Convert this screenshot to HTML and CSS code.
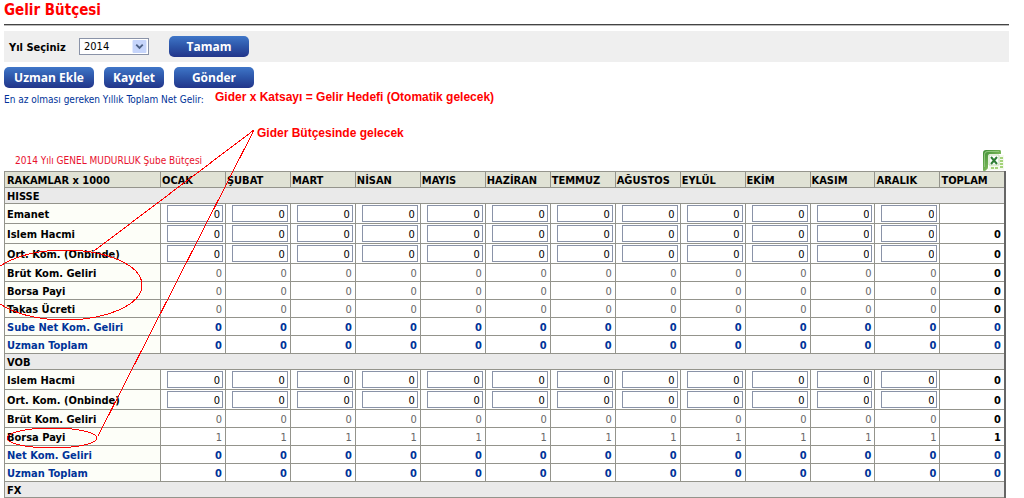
FILE: index.html
```html
<!DOCTYPE html>
<html lang="tr">
<head>
<meta charset="utf-8">
<title>Gelir Bütçesi</title>
<link rel="stylesheet" href="styles.css">
</head>
<body>
<main class="page">
  <h1 class="title">Gelir Bütçesi</h1>
  <form class="filter">
    <label class="filter-label" for="year">Yıl Seçiniz</label>
    <span class="select-box">
      <select id="year" class="select"><option>2014</option></select>
      <svg class="select-arrow" viewBox="0 0 15 14" aria-hidden="true">
        <rect width="15" height="14" rx="1" fill="#c6d5fb"/>
        <path d="M4 5l3.5 3.5L11 5" fill="none" stroke="#4d6185" stroke-width="2"/>
      </svg>
    </span>
    <button type="button" class="btn btn-medium">Tamam</button>
  </form>
  <div class="actions">
    <button type="button" class="btn btn-large">Uzman Ekle</button>
    <button type="button" class="btn btn-small">Kaydet</button>
    <button type="button" class="btn btn-medium">Gönder</button>
  </div>
  <div class="target">
    <span class="target-label">En az olması gereken Yıllık Toplam Net Gelir:</span>
    <strong class="note">Gider x Katsayı = Gelir Hedefi (Otomatik gelecek)</strong>
  </div>
  <div class="table-head">
    <p class="table-title">2014 Yılı GENEL MUDURLUK Şube Bütçesi</p>
    <a class="excel" href="#" aria-label="Excel">
      <svg class="excel-icon" viewBox="0 0 21 21" aria-hidden="true">
        <defs>
          <linearGradient id="leaf" x1="0" y1="0" x2="1" y2="1">
            <stop offset="0" stop-color="#3c8b35"/><stop offset="1" stop-color="#a8d873"/>
          </linearGradient>
        </defs>
        <path d="M3 0h14q1 0 1 2v2H7Q5 4 5 7v10q0 3-4 4-1 0-1-1V3q0-3 3-3z" fill="url(#leaf)"/>
        <path d="M5 1h11v1H5Q2 2 2 5v12H1V5q0-4 4-4z" fill="#8fc67b"/>
        <path d="M6 5h15v15H3q3-1 3-4z" fill="#f5faef"/>
        <path d="M6 5h10v10H6z" fill="#fff" stroke="#c3dcb4"/>
        <path d="M8 7l6 7M14 7l-6 7" stroke="#2e7d35" stroke-width="2"/>
        <path d="M17 7h3v2h-3zM17 10h3v2h-3zM17 13h3v2h-3zM8 17h3v2H8zM12 17h3v2h-3zM17 16h3v2h-3z" fill="#a5d37b"/>
      </svg>
    </a>
  </div>
  <table class="budget">
    <colgroup><col class="col-name"><col span="13"></colgroup>
    <thead><tr id="head"></tr></thead>
    <tbody id="rows"></tbody>
  </table>
  <svg class="marks" width="260" height="460" aria-hidden="true">
    <g fill="none" stroke="#f00" shape-rendering="crispEdges">
      <path d="M254 130L94 251M254 130L98 436"/>
      <ellipse cx="65" cy="285" rx="77" ry="35"/>
      <ellipse cx="52" cy="438" rx="45" ry="10"/>
    </g>
  </svg>
  <strong class="note note-float">Gider Bütçesinde gelecek</strong>
</main>
<script src="table.js"></script>
</body>
</html>
```
FILE: styles.css
```css
* { box-sizing: border-box; }
body {
  margin: 0;
  background: #fff;
  color: #000;
  font: 11px/14px "DejaVu Sans Condensed", Tahoma, "Noto Sans", sans-serif;
}
.page { position: relative; padding: 0 15px 0 4px; }
.title {
  margin: 0 0 6px;
  height: 25px;
  border-bottom: 1px solid #444;
  box-shadow: 0 1px #bbb;
  color: #f00;
  font-size: 15px;
  line-height: 20px;
}
.filter {
  display: flex;
  align-items: center;
  height: 31px;
  padding-left: 5px;
  background: #efefef;
}
.filter-label { width: 70px; padding-top: 2px; font-weight: bold; }
.select-box { position: relative; width: 70px; height: 17px; margin-right: 20px; }
.select {
  display: block;
  width: 100%;
  height: 17px;
  padding: 1px 4px 0;
  border: 1px solid #8a93a8;
  border-radius: 0;
  background: #fff;
  appearance: none;
  font: inherit;
}
.select-arrow { position: absolute; top: 2px; right: 2px; width: 15px; height: 13px; pointer-events: none; }
.actions { display: flex; gap: 10px; padding-top: 5px; }
.btn {
  height: 21px;
  padding: 0;
  border: 0;
  border-radius: 5px;
  background: linear-gradient(#3f76c8, #2d55a8 50%, #22358a);
  color: #fff;
  font: bold 12px/20px "Open Sans", "Noto Sans", sans-serif;
}
.btn-small { width: 60px; }
.btn-medium { width: 80px; }
.btn-large { width: 90px; }
.target { display: flex; height: 20px; }
.target-label, .table-title { font-size: 10px; }
.target-label { width: 211px; padding-top: 5px; color: #039; white-space: nowrap; }
.note { color: #f00; font: bold 12px/18px "Liberation Sans", Arial, sans-serif; white-space: nowrap; }
.note-float { position: absolute; top: 124px; left: 257px; }
.table-head { display: flex; justify-content: space-between; align-items: flex-end; height: 63px; padding-right: 5px; }
.table-title { margin: 0; padding: 0 0 3px 11px; color: #e8112d; }
.excel-icon { display: block; width: 21px; height: 21px; }
.budget {
  width: calc(100% - 3px);
  table-layout: fixed;
  border-collapse: collapse;
  border: 1px solid #666;
  border-right-width: 2px;
}
.col-name { width: 156px; }
.budget th, .budget td { height: 18px; padding: 3px 3px 0 2px; border: 1px solid #94948c; line-height: 12px; white-space: nowrap; }
.budget th { text-align: left; }
.budget td { text-align: right; color: #666; }
.budget thead th { height: 16px; background: #e0e2d5; }
.budget thead th + th { padding-left: 1px; }
.budget .section th { height: 16px; background: #eaeaea; }
.budget tbody th { background: #fdfef8; }
.budget .entry th, .budget .entry td { height: 20px; }
.budget .entry td { padding-right: 2px; }
.budget td.total { padding-right: 3px; color: #000; font-weight: bold; }
.budget .entry td:not(.total) { padding-top: 0; }
.budget .sum th, .budget .sum td, .budget .sum td.total { color: #039; font-weight: bold; }
.cell {
  display: block;
  width: calc(100% - 4px);
  height: 17px;
  margin-left: auto;
  padding: 1px 2px 0;
  border: 1px solid #8a93a8;
  background: #fff;
  color: #000;
  font: inherit;
  text-align: right;
}
.marks { position: absolute; top: 0; left: 0; pointer-events: none; }
```
FILE: table.js
```js
const months = ["OCAK", "ŞUBAT", "MART", "NİSAN", "MAYIS", "HAZİRAN", "TEMMUZ", "AĞUSTOS", "EYLÜL", "EKİM", "KASIM", "ARALIK"];
// [name, kind, monthly value, total]
const rows = [
  ["HISSE", "section"],
  ["Emanet", "entry", 0, ""],
  ["Islem Hacmi", "entry", 0, 0],
  ["Ort. Kom. (Onbinde)", "entry", 0, 0],
  ["Brüt Kom. Geliri", "plain", 0, 0],
  ["Borsa Payi", "plain", 0, 0],
  ["Takas Ücreti", "plain", 0, 0],
  ["Sube Net Kom. Geliri", "sum", 0, 0],
  ["Uzman Toplam", "sum", 0, 0],
  ["VOB", "section"],
  ["Islem Hacmi", "entry", 0, 0],
  ["Ort. Kom. (Onbinde)", "entry", 0, 0],
  ["Brüt Kom. Geliri", "plain", 0, 0],
  ["Borsa Payi", "plain", 1, 1],
  ["Net Kom. Geliri", "sum", 0, 0],
  ["Uzman Toplam", "sum", 0, 0],
  ["FX", "section"]
];
document.getElementById("head").innerHTML =
  ["RAKAMLAR x 1000", ...months, "TOPLAM"].map(t => `<th scope="col">${t}</th>`).join("");
document.getElementById("rows").innerHTML = rows.map(([name, kind, value, total]) => {
  if (kind === "section") return `<tr class="section"><th colspan="14">${name}</th></tr>`;
  const cells = months.map(m => kind === "entry"
    ? `<td><input class="cell" aria-label="${name} ${m}" value="${value}"></td>`
    : `<td>${value}</td>`).join("");
  return `<tr class="${kind}"><th scope="row">${name}</th>${cells}<td class="total">${total}</td></tr>`;
}).join("");
```
